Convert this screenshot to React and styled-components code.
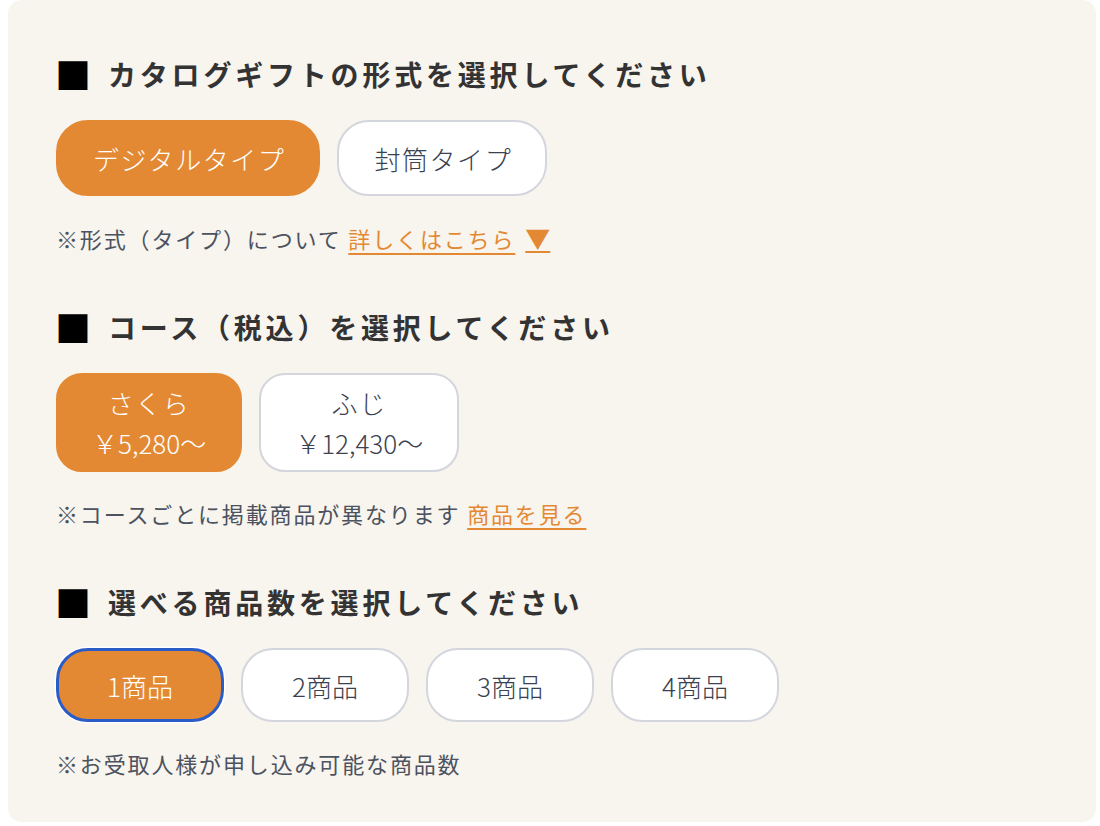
import styled, { createGlobalStyle, css } from 'styled-components';
import { useState } from 'react';

const GlobalStyle = createGlobalStyle`
  html, body {
    margin: 0;
    padding: 0;
    background: #ffffff;
  }
  body {
    font-family: "Noto Sans CJK JP", "Noto Sans", sans-serif;
    color: #333333;
  }
  * {
    box-sizing: border-box;
  }
`;

const types = ['デジタルタイプ', '封筒タイプ'];
const courses = [
  { id: 'sakura', name: 'さくら', price: '￥5,280〜' },
  { id: 'fuji', name: 'ふじ', price: '￥12,430〜' },
];
const counts = [1, 2, 3, 4];

const App = () => {
  const [type, setType] = useState(0);
  const [course, setCourse] = useState('sakura');
  const [count, setCount] = useState(1);

  return (
    <>
      <GlobalStyle />
      <Panel>
        <Section>
          <Heading>
            <Mark>■</Mark>カタログギフトの形式を選択してください
          </Heading>
          <Options>
            {types.map((t, i) => (
              <PillButton key={t} $active={type === i} onClick={() => setType(i)}>
                {t}
              </PillButton>
            ))}
          </Options>
          <Note>
            ※形式（タイプ）について <Link href='#'>詳しくはこちら</Link>
            <Arrow>▼</Arrow>
          </Note>
        </Section>

        <Section>
          <Heading>
            <Mark>■</Mark>コース（税込）を選択してください
          </Heading>
          <Options>
            {courses.map((c) => (
              <CourseButton
                key={c.id}
                $active={course === c.id}
                onClick={() => setCourse(c.id)}
              >
                <span>{c.name}</span>
                <Price>{c.price}</Price>
              </CourseButton>
            ))}
          </Options>
          <Note>
            ※コースごとに掲載商品が異なります <Link href='#'>商品を見る</Link>
          </Note>
        </Section>

        <Section>
          <Heading>
            <Mark>■</Mark>選べる商品数を選択してください
          </Heading>
          <Options>
            {counts.map((n) => (
              <CountButton
                key={n}
                $active={count === n}
                $focused={n === 1}
                onClick={() => setCount(n)}
              >
                {n}商品
              </CountButton>
            ))}
          </Options>
          <Note>※お受取人様が申し込み可能な商品数</Note>
        </Section>
      </Panel>
    </>
  );
};
export default App;

const Panel = styled.div`
  margin: 0 4px 0 8px;
  height: 822px;
  background: #f8f4ee;
  border-radius: 14px;
  padding: 56px 48px 0 48px;
`;

const Section = styled.section`
  margin-bottom: 57px;

  &:last-child {
    margin-bottom: 0;
  }
`;

const Heading = styled.h2`
  display: flex;
  align-items: center;
  margin: 0 0 28px 0;
  font-size: 28px;
  line-height: 36px;
  font-weight: 700;
  letter-spacing: 3.8px;
  color: #333333;
  white-space: nowrap;
`;

// the black square marker in front of each heading
const Mark = styled.span`
  display: inline-block;
  margin: 0 17px 0 -1px;
  font-size: 36px;
  line-height: 36px;
  letter-spacing: 0;
  font-weight: 400;
  color: #000000;
`;

const Options = styled.div`
  display: flex;
  gap: 17px;
  margin-bottom: 27px;
`;

const baseButton = css`
  font-family: "Noto Sans CJK JP", "Noto Sans", sans-serif;
  font-size: 26px;
  font-weight: 300;
  letter-spacing: 0.06em;
  cursor: pointer;
  border: 2px solid ${(p) => (p.$active ? '#e48933' : '#d3d6dd')};
  background: ${(p) => (p.$active ? '#e48933' : '#ffffff')};
  color: ${(p) => (p.$active ? '#ffffff' : '#3a4150')};
  outline: none;
`;

const PillButton = styled.button`
  ${baseButton}
  height: 76px;
  padding: 0 33px 0 35px;
  border-radius: 32px;
`;

const CourseButton = styled.button`
  ${baseButton}
  display: flex;
  flex-direction: column;
  align-items: center;
  justify-content: center;
  height: 99px;
  padding: 0 34px;
  border-radius: 26px;
  line-height: 40px;
`;

const Price = styled.span`
  letter-spacing: 0;
`;

const CountButton = styled.button`
  ${baseButton}
  width: 168px;
  height: 74px;
  padding: 0;
  border-radius: 32px;
  letter-spacing: 0;

  ${(p) =>
    p.$focused &&
    css`
      border: 3px solid #2a5cc8;
      box-shadow: 0 0 0 1.5px #ffffff;
    `}
`;

const Note = styled.p`
  margin: 0;
  font-size: 22px;
  line-height: 28px;
  letter-spacing: 1.85px;
  color: #4b5260;
`;

const Link = styled.a`
  color: #e48933;
  text-decoration: underline;
  text-underline-offset: 5px;
  text-decoration-thickness: 2px;
`;

const Arrow = styled.span`
  margin-left: 10px;
  font-size: 25px;
  color: #e48933;
  text-decoration: underline;
  text-underline-offset: 3px;
  text-decoration-thickness: 2px;
  letter-spacing: 0;
`;
